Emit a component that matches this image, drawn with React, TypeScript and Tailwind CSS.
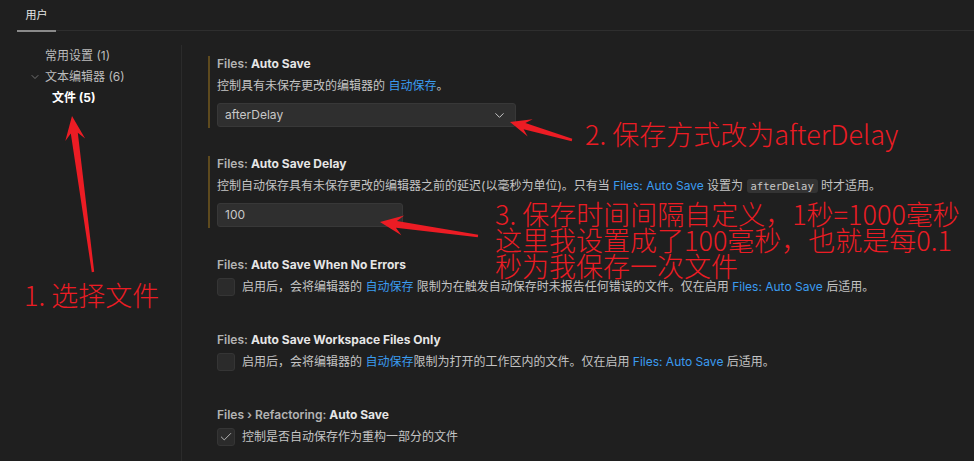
import { ChevronDown, Check } from "lucide-react";

type Pt = [number, number];

// tapered annotation arrow, tip first
function arrowPoints(tip: Pt, tail: Pt, len: number, half: number, neck: number, end: number) {
  const dx = tip[0] - tail[0];
  const dy = tip[1] - tail[1];
  const m = Math.hypot(dx, dy);
  const ux = dx / m;
  const uy = dy / m;
  const nx = -uy;
  const ny = ux;
  const at = (d: number, o: number): string =>
    `${(tip[0] - ux * d + nx * o).toFixed(1)},${(tip[1] - uy * d + ny * o).toFixed(1)}`;
  return [
    at(0, 0),
    at(len, half),
    at(len * 0.72, neck),
    at(m, end),
    at(m, -end),
    at(len * 0.72, -neck),
    at(len, -half),
  ].join(" ");
}

const uiFont = "font-['Inter','Noto_Sans_CJK_SC',sans-serif]";

function Title({ prefix, name }: { prefix: string; name: string }) {
  return (
    <div className="h-4 leading-4 text-[12px] whitespace-nowrap">
      <span className="font-semibold text-[#b3b3b3]">{prefix}</span>
      <span className="font-bold text-[#e6e6e6]">{name}</span>
    </div>
  );
}

function Link({ children }: { children: React.ReactNode }) {
  return <span className="text-[#3b9cf0]">{children}</span>;
}

function CheckRow({ checked, children }: { checked?: boolean; children: React.ReactNode }) {
  return (
    <div className="mt-[5px] flex items-center h-[18px]">
      <div className="w-[18px] h-[18px] rounded-[3px] bg-[#2b2b2b] border border-[#353535] flex items-center justify-center shrink-0">
        {checked && <Check size={14} strokeWidth={1.6} className="text-[#bdbdbd]" />}
      </div>
      <div className="ml-[7px] text-[12px] leading-[18px] text-[#c4c4c4] whitespace-nowrap">{children}</div>
    </div>
  );
}

export default function App() {
  return (
    <div className={`relative w-[974px] h-[461px] overflow-hidden bg-[#1f1f1f] ${uiFont}`}>
      {/* tab header */}
      <div className="h-8 pl-[17px] flex flex-col">
        <div className="h-[30px] w-[39px] flex items-center justify-center text-[11px] text-[#e6e6e6]">用户</div>
        <div className="h-[2px] flex">
          <div className="w-[39px] h-[2px] bg-[#8a8a8a]" />
          <div className="flex-1 h-px bg-[#2e2e2e]" />
        </div>
      </div>

      <div className="mt-[13px] flex h-[416px]">
        {/* tree */}
        <div className="w-[182px] border-r border-[#2b2b2b] text-[12px]">
          <div className="h-[21px] pl-[45px] flex items-center text-[#bcbcbc]">常用设置 (1)</div>
          <div className="h-[21px] pl-[29px] flex items-center text-[#bcbcbc]">
            <ChevronDown size={12} strokeWidth={1.5} className="text-[#8c8c8c] mr-[4px]" />
            文本编辑器 (6)
          </div>
          <div className="h-[21px] pl-[52px] flex items-center font-bold text-white">文件 (5)</div>
        </div>

        {/* settings list */}
        <div className="flex-1 pl-[26px]">
          <div className="mt-[11px] border-l-2 border-[#5e4a1e] pl-[7px] pb-px">
            <Title prefix="Files: " name="Auto Save" />
            <div className="mt-[5px] text-[12px] leading-[18px] text-[#c4c4c4]">
              控制具有未保存更改的编辑器的 <Link>自动保存</Link>。
            </div>
            <div className="mt-[8px] w-[299px] h-6 rounded-[3px] bg-[#2f2f2f] border border-[#383838] flex items-center justify-between pl-[7px] pr-[8px]">
              <span className="text-[12px] text-[#c8c8c8]">afterDelay</span>
              <ChevronDown size={15} strokeWidth={1.6} className="text-[#c8c8c8]" />
            </div>
          </div>

          <div className="mt-[28px] border-l-2 border-[#5e4a1e] pl-[7px] pb-px">
            <Title prefix="Files: " name="Auto Save Delay" />
            <div className="mt-[5px] text-[12px] leading-[18px] text-[#c4c4c4] whitespace-nowrap">
              控制自动保存具有未保存更改的编辑器之前的延迟(以毫秒为单位)。只有当 <Link>Files: Auto Save</Link> 设置为{" "}
              <span className="px-[4px] py-px rounded-[3px] bg-[#333333] font-['DejaVu_Sans_Mono',monospace] text-[10.5px] text-[#c8c8c8]">afterDelay</span>{" "}
              时才适用。
            </div>
            <div className="mt-[8px] w-[186px] h-6 rounded-[3px] bg-[#2f2f2f] border border-[#383838] flex items-center pl-[7px]">
              <span className="text-[12px] text-[#c8c8c8]">100</span>
            </div>
          </div>

          <div className="mt-[29px] pl-[9px]">
            <Title prefix="Files: " name="Auto Save When No Errors" />
            <CheckRow>
              启用后，会将编辑器的 <Link>自动保存</Link> 限制为在触发自动保存时未报告任何错误的文件。仅在启用 <Link>Files: Auto Save</Link> 后适用。
            </CheckRow>
          </div>

          <div className="mt-[36px] pl-[9px]">
            <Title prefix="Files: " name="Auto Save Workspace Files Only" />
            <CheckRow>
              启用后，会将编辑器的 <Link>自动保存</Link>限制为打开的工作区内的文件。仅在启用 <Link>Files: Auto Save</Link> 后适用。
            </CheckRow>
          </div>

          <div className="mt-[36px] pl-[9px]">
            <Title prefix="Files › Refactoring: " name="Auto Save" />
            <CheckRow checked>控制是否自动保存作为重构一部分的文件</CheckRow>
          </div>
        </div>
      </div>

      {/* red annotations drawn on top of the screenshot */}
      <svg className="absolute inset-0 pointer-events-none" width={974} height={461} viewBox="0 0 974 461">
        <polygon points={arrowPoints([72, 116], [93, 272], 24, 10, 3.5, 1.2)} fill="#ec1c24" />
        <polygon points={arrowPoints([510, 122], [572, 140], 21, 9, 3.2, 1.2)} fill="#ec1c24" />
        <polygon points={arrowPoints([380, 222], [478, 236], 23, 10, 3.4, 1.2)} fill="#ec1c24" />
      </svg>
      <div className="absolute left-[24px] top-[281px] text-[27px] leading-[27px] font-light text-[#ec1c24] font-['Noto_Sans_CJK_SC',sans-serif] whitespace-nowrap">
        1. 选择文件
      </div>
      <div className="absolute left-[585px] top-[120px] text-[27px] leading-[27px] font-light text-[#ec1c24] font-['Noto_Sans_CJK_SC',sans-serif] whitespace-nowrap">
        2. 保存方式改为afterDelay
      </div>
      <div className="absolute left-[495px] top-[201px] text-[27px] leading-[26px] font-light text-[#ec1c24] font-['Noto_Sans_CJK_SC',sans-serif] whitespace-nowrap">
        <div>3. 保存时间间隔自定义，1秒=1000毫秒</div>
        <div>这里我设置成了100毫秒，也就是每0.1</div>
        <div>秒为我保存一次文件</div>
      </div>
    </div>
  );
}
